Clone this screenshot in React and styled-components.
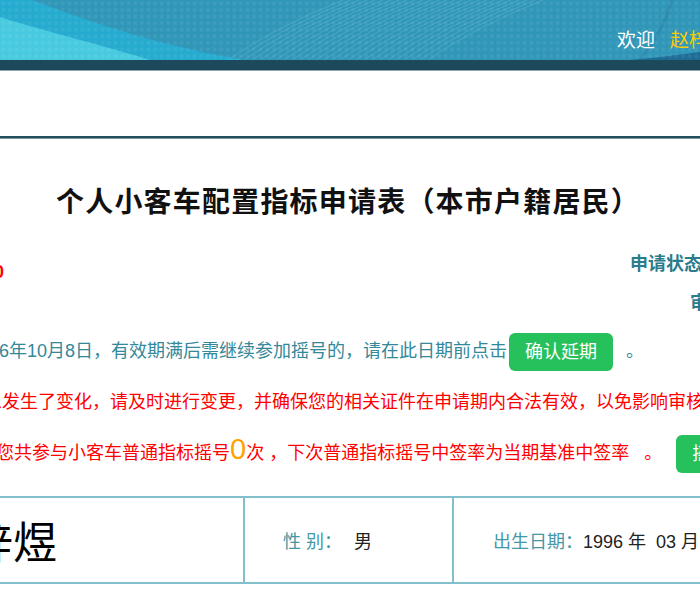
import styled, { createGlobalStyle } from "styled-components";

const SANS = `"Liberation Sans", "Noto Sans CJK SC", sans-serif`;

const GlobalStyle = createGlobalStyle`
  html, body {
    margin: 0;
    padding: 0;
    overflow: hidden;
    background: #fff;
  }
  body {
    font-family: ${SANS};
  }
`;

const Banner = styled.header`
  position: relative;
  height: 60px;
  background: #3096b8;
  overflow: hidden;
`;

const BannerArt = styled.svg`
  position: absolute;
  left: 0;
  top: 0;
  width: 100%;
  height: 100%;
`;

const Frame = styled.div`
  width: 1000px;
  margin-left: -156px;
  box-sizing: border-box;
`;

const BannerInner = styled(Frame)`
  position: relative;
  height: 100%;
  display: flex;
  justify-content: flex-end;
  align-items: center;
  gap: 15px;
  padding: 16px 64px 0 0;
  font-size: 19px;
  color: #fff;
`;

const UserName = styled.span`
  color: ${(p) => p.$color || "#fff"};
`;

const DarkBand = styled.div`
  height: 10px;
  background: #1c4a5a;
  border-bottom: 1px solid #8ea7ae;
`;

const NavArea = styled.nav`
  height: 65px;
  background: #fff;
`;

const Divider = styled.div`
  height: 2px;
  background: #22505e;
  border-bottom: 1px solid #7897a1;
`;

const Content = styled(Frame)`
  padding-top: 44px;
`;

const Title = styled.h1`
  margin: 0;
  padding-left: 8px;
  height: 40px;
  line-height: 40px;
  text-align: center;
  font-family: "Liberation Serif", "Noto Sans CJK SC", serif;
  font-size: 28px;
  font-weight: 700;
  letter-spacing: 1.2px;
  color: #111;
`;

const StatusBlock = styled.div`
  margin-top: 22px;
`;

const StatusRow = styled.div`
  height: 39px;
  display: flex;
  justify-content: space-between;
  align-items: flex-start;
  line-height: 39px;
  font-size: 18px;
  font-weight: 700;
`;

const ApplyCode = styled.span`
  color: #f00;
  padding-top: 8px;
`;

const StatusText = styled.span`
  margin-left: auto;
  padding-right: ${(p) => p.$pad}px;
  color: #2b7c8c;
`;

const Notices = styled.div`
  margin-top: 3px;
`;

const Notice = styled.p`
  margin: 0 0 0 ${(p) => p.$lead}px;
  height: 51px;
  line-height: 51px;
  white-space: nowrap;
  font-size: 18px;
  color: ${(p) => p.$color};
`;

const Count = styled.span`
  font-size: 29px;
  line-height: 0;
  color: #ffa200;
`;

const GreenButton = styled.button`
  display: inline-block;
  vertical-align: middle;
  height: 38px;
  padding: 0 16px;
  margin: 0 ${(p) => p.$mr || 0}px 0 ${(p) => p.$ml || 0}px;
  border: none;
  border-radius: 6px;
  background: #26c15c;
  color: #fff;
  font-family: ${SANS};
  font-size: 18px;
  line-height: 38px;
  white-space: nowrap;
`;

const InfoTable = styled.div`
  margin-top: 17px;
  display: grid;
  grid-template-columns: 399px 209px 1fr;
  height: 84px;
  border-top: 2px solid #7fc0cb;
  border-bottom: 2px solid #7fc0cb;
`;

const Cell = styled.div`
  display: flex;
  align-items: center;
  padding-left: ${(p) => p.$pad}px;
  border-left: ${(p) => (p.$first ? "none" : "2px solid #7fc0cb")};
  font-size: 18px;
  white-space: nowrap;
`;

const Name = styled.span`
  font-size: 44px;
  color: #000;
`;

const Label = styled.span`
  color: #4597a5;
`;

const Value = styled.span`
  margin-left: ${(p) => p.$gap || 0}px;
  color: #222;
`;

const curves = Array.from({ length: 26 }, (_, i) => 228 + i * 8);

export default function App() {
  return (
    <>
      <GlobalStyle />
      <Banner>
        <BannerArt viewBox="0 0 700 60" preserveAspectRatio="none">
          <defs>
            <pattern id="dots" width="6.6" height="6.6" patternUnits="userSpaceOnUse">
              <rect x="1.5" y="1.5" width="3.6" height="3.6" fill="#fff" opacity="0.07" />
            </pattern>
          </defs>
          <rect width="700" height="60" fill="#3096b8" />
          <path d="M0 0H32C90 22 160 46 245 60H0Z" fill="#25abcf" />
          <path d="M0 17C40 30 95 43 150 60H0Z" fill="#47cadf" />
          {curves.map((x) => (
            <path
              key={x}
              d={`M${x} 60Q${x + 45} 28 ${x + 115} 0`}
              fill="none"
              stroke="#bdf1fb"
              strokeOpacity="0.22"
              strokeWidth="0.8"
            />
          ))}
          <path d="M672 0Q664 30 640 60" fill="none" stroke="#2a86a8" strokeWidth="3" opacity="0.6" />
          <path d="M630 60C660 57 680 55 700 52V60Z" fill="#1d6c95" />
          <rect width="700" height="60" fill="url(#dots)" />
        </BannerArt>
        <BannerInner>
          <UserName>欢迎</UserName>
          <UserName $color="#ffcc00">赵梓煜</UserName>
          <UserName>退出</UserName>
        </BannerInner>
      </Banner>
      <DarkBand />
      <NavArea />
      <Divider />

      <Content>
        <Title>个人小客车配置指标申请表（本市户籍居民）</Title>

        <StatusBlock>
          <StatusRow>
            <ApplyCode>申请编码：8010240</ApplyCode>
            <StatusText $pad={52}>申请状态：审核通过</StatusText>
          </StatusRow>
          <StatusRow>
            <StatusText $pad={28}>审核结果：通过</StatusText>
          </StatusRow>
        </StatusBlock>

        <Notices>
          <Notice $lead={-19} $color="#338899">
            您的申请有效期至2016年10月8日，有效期满后需继续参加摇号的，请在此日期前点击
            <GreenButton $ml={2} $mr={8}>确认延期</GreenButton> 。
          </Notice>
          <Notice $lead={32} $color="#f00">
            如您的个人信息发生了变化，请及时进行变更，并确保您的相关证件在申请期内合法有效，以免影响审核结果。
          </Notice>
          <Notice $lead={62} $color="#f00">
            截至目前，您共参与小客车普通指标摇号<Count>0</Count>次 ，下次普通指标摇号中签率为当期基准中签率&nbsp;&nbsp; 。
            <GreenButton $ml={14}>摇号记录查询</GreenButton>
          </Notice>
        </Notices>

        <InfoTable>
          <Cell $first $pad={81}>
            <Name>赵梓煜</Name>
          </Cell>
          <Cell $pad={38}>
            <Label>性&nbsp;别：</Label>
            <Value $gap={12}>男</Value>
          </Cell>
          <Cell $pad={39}>
            <Label>出生日期：</Label>
            <Value>1996 年&nbsp; 03 月&nbsp; 08 日</Value>
          </Cell>
        </InfoTable>
      </Content>
    </>
  );
}
